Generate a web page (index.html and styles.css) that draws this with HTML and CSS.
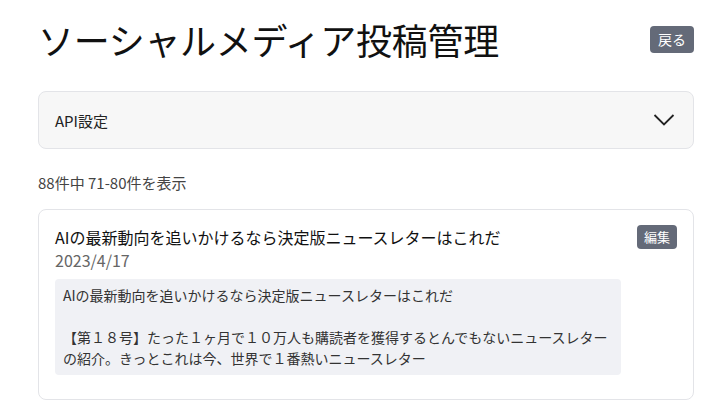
FILE: index.html
```html
<!DOCTYPE html>
<html lang="ja">
<head>
    <meta charset="utf-8">
    <title>ソーシャルメディア投稿管理</title>
    <link rel="stylesheet" href="styles.css">
</head>
<body>
<div class="page">
    <div class="page-head"><!-- タイトル部分 -->
        <h1 class="page-title">ソーシャルメディア投稿管理</h1>
        <a class="btn" href="#">戻る</a>
    </div>
    <div class="accordion"><!-- API設定 -->
        <span>API設定</span>
        <svg class="chevron" width="22" height="14" viewBox="0 0 22 14"><path d="M1.5 2 L11 11.5 L20.5 2" fill="none" stroke="#222" stroke-width="1.8"/></svg>
    </div>
    <p class="count">88件中 71-80件を表示</p>
    <div class="post"><!-- 投稿 -->
        <div class="post-main">
            <div class="post-title">AIの最新動向を追いかけるなら決定版ニュースレターはこれだ</div>
            <div class="post-date">2023/4/17</div>
            <div class="post-body">AIの最新動向を追いかけるなら決定版ニュースレターはこれだ<br><br>【第１８号】たった１ヶ月で１０万人も購読者を獲得するとんでもないニュースレターの紹介。きっとこれは今、世界で１番熱いニュースレター</div>
        </div>
        <a class="btn btn-sm" href="#">編集</a>
    </div>
</div>
</body>
</html>
```

FILE: styles.css
```css
body,div,h1,p,a{margin: 0;padding: 0;}
a{text-decoration: none;}
body{background: #fff;color: #222;font-family: "Noto Sans CJK JP", "Noto Sans", sans-serif;}

.page{padding: 14px 33px 0 38px;}
.page-head{display: flex;justify-content: space-between;align-items: center;height: 50px;margin-bottom: 27px;}
.page-title{font-size: 36px;font-weight: 400;line-height: 50px;color: #111;letter-spacing: -0.3px;}
.btn{display: inline-block;background: #646a78;color: #fff;font-size: 14px;line-height: 27px;padding: 0 8px;border-radius: 4px;}
.btn-sm{font-size: 13px;line-height: 24px;padding: 0 7px;}

.accordion{display: flex;justify-content: space-between;align-items: center;height: 56px;padding: 0 18px 0 16px;background: #f7f7f7;border: 1px solid #e3e4e8;border-radius: 8px;font-size: 15px;}
.chevron{display: block;}

.count{font-size: 15px;color: #444;margin: 23px 0 15px;line-height: 22px;}

.post{display: flex;justify-content: space-between;align-items: flex-start;padding: 15px 16px 24px 16px;border: 1px solid #e3e4e8;border-radius: 8px;}
.post-main{width: 566px;}
.post-title{font-size: 16px;line-height: 24px;color: #111;}
.post-date{font-size: 16px;color: #666;line-height: 22px;margin-bottom: 8px;}
.post-body{background: #f0f1f5;border-radius: 4px;padding: 6px 8px 6px;font-size: 14px;line-height: 21px;color: #333;}
```
